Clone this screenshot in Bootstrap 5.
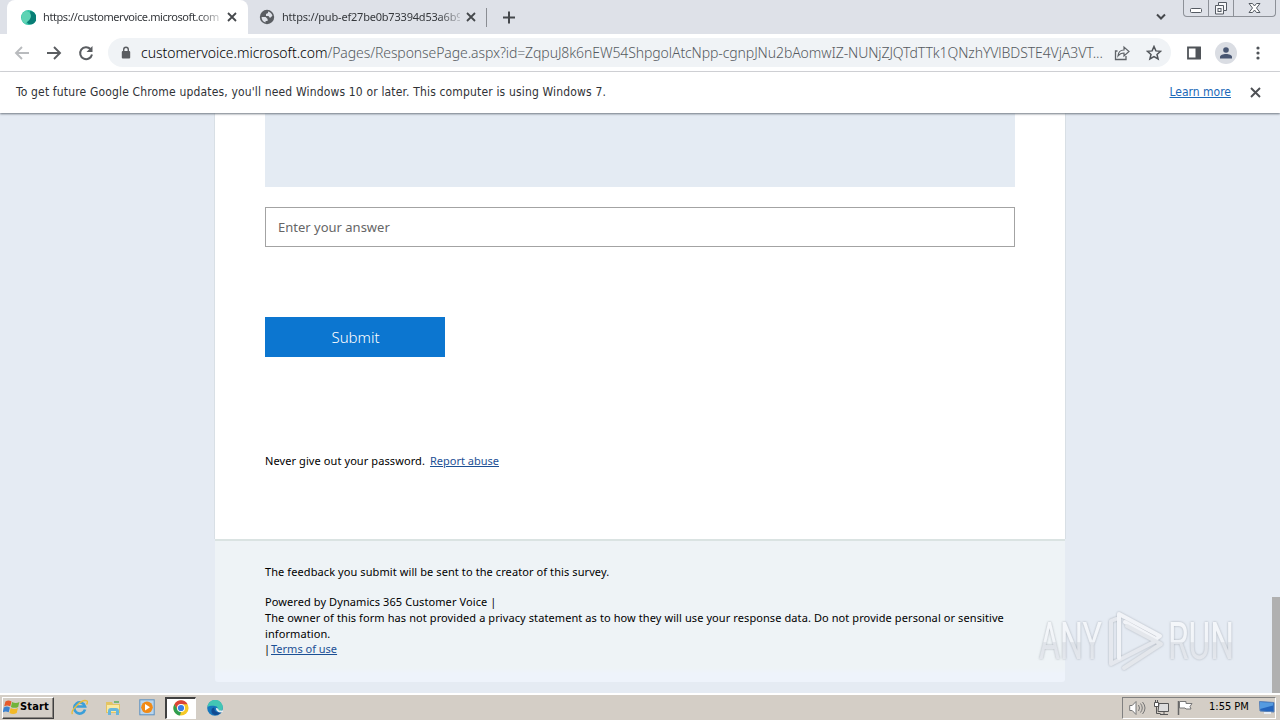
<!DOCTYPE html>
<html lang="en">
<head>
    <meta charset="UTF-8">
    <title>Customer Voice</title>
    <link href="https://cdn.jsdelivr.net/npm/bootstrap@5.3.0/dist/css/bootstrap.min.css" rel="stylesheet">
    <style>
        body { width: 1280px; height: 720px; overflow: hidden; background: #e5ebf3; color: #202124; font-family: "DejaVu Sans Condensed", "DejaVu Sans", sans-serif; font-size: 12px; }
        svg { display: block; flex: none; }
        .txt { white-space: nowrap; flex: none; }

        /* browser chrome */
        .tabstrip { height: 34px; background: #dee1e8; }
        .tab-active { width: 241px; margin-left: 7px; background: #fff; border-radius: 8px 8px 0 0; padding-left: 14px; }
        .tab-idle { width: 238px; padding-left: 11px; }
        .tab-title { font-family: "Noto Sans", sans-serif; font-size: 11px; line-height: 16px; letter-spacing: -.42px; color: #35383c; -webkit-mask-image: linear-gradient(90deg, #000 88%, transparent 104%); mask-image: linear-gradient(90deg, #000 88%, transparent 104%); }
        .tab-sep { width: 1px; height: 19px; background: #8a8d93; }
        .win-buttons { width: 93px; height: 17px; border: 1px solid #8d9198; border-top: 0; border-radius: 0 0 4px 4px; }
        .win-buttons > div { border-right: 1px solid #8d9198; height: 16px; }
        .win-buttons > div:last-child { border-right: 0; }
        .toolbar { height: 38px; border-bottom: 1px solid #d5d7da; }
        .omnibox { width: 1063px; height: 29px; margin-left: 14px; border-radius: 15px; background: #f0f3f6; padding-left: 13px; }
        .url { font-family: "Noto Sans", sans-serif; font-size: 14px; line-height: 20px; font-weight: 300; width: 962px; color: #555a60; letter-spacing: -.09px; }
        .url b { font-weight: 300; color: #000; letter-spacing: -.02px; }
        .avatar { width: 22px; height: 22px; background: #dadde3; }
        .infobar { height: 41px; padding-bottom: 2px; box-shadow: 0 1px 2px #6f7781; z-index: 2; color: #303236; }
        .info-text { letter-spacing: .16px; }
        .info-link { color: #1a68b8; }

        /* survey page */
        .viewport { height: 580px; font-family: "Noto Sans", "Open Sans", sans-serif; }
        .survey { width: 852px; margin-left: 214px; height: 569px; }
        .survey-body { height: 426px; border: 1px solid #d8dfe5; border-top: 0; border-bottom: 0; padding: 0 50px; }
        .question-box { height: 74px; background: #e4ebf3; }
        .answer { height: 40px; margin-top: 20px; border: 1px solid #a3a3a3; border-radius: 0; padding: 0 12px; font-size: 13px; letter-spacing: 0; }
        .answer::placeholder { color: #666; }
        .submit-btn { width: 180px; height: 40px; margin-top: 70px; background: #0c76d0; border: 0; border-radius: 0; color: #fff; font-size: 15px; font-weight: 300; padding: 0 0 0 1px; }
        .fine { font-size: 11px; line-height: 16px; color: #000; letter-spacing: .09px; }
        .fine a { color: #1c5095; letter-spacing: 0; }
        .survey-foot { width: 850px; margin-left: 1px; height: 143px; background: linear-gradient(#eef3f6 0 90%, #eef3fb 94%); border-top: 2px solid #dae3e2; border-radius: 0 0 3px 3px; padding: 23px 50px 0; }
        .terms-row { line-height: 14px; }
        .scroll-thumb { right: 0; bottom: 0; width: 8px; height: 96px; background: #b0b0b0; }
        .watermark { left: 1032px; top: 490px; }

        /* windows taskbar */
        .taskbar { height: 27px; background: #d4cec6; border-top: 2px solid #fff; padding-left: 2px; font-family: "DejaVu Sans Condensed", sans-serif; }
        .start-btn { width: 52px; height: 22px; border: 1px solid #fff; border-right-color: #404040; border-bottom-color: #404040; box-shadow: inset -1px -1px #8a8580; font-weight: bold; font-size: 11px; color: #000; }
        .task-active { width: 31px; height: 22px; background: #fff; border: 1px solid #fff; border-top: 2px solid #404040; border-left: 2px solid #404040; }
        .tray { width: 154px; height: 22px; border: 1px solid #fff; border-top-color: #808080; border-left-color: #808080; font-size: 11px; color: #000; }
    </style>
</head>
<body class="d-flex flex-column">

<div class="tabstrip d-flex flex-shrink-0">
    <div class="tab-active d-flex align-items-center">
        <svg width="15" height="15" viewBox="0 0 15 15">
            <circle cx="7.5" cy="7.5" r="7.500" fill="#35c3a6"/>
            <path d="M9 1a7 7 0 0 1 3 13c-4 1-7-1-6-4 1-2 4-4 3-9z" fill="#087e76"/>
            <path d="M5 1c5 1 6 5 4 8s-4 3-4 5A7 7 0 0 1 5 1z" fill="#5fd3b4"/>
        </svg>
        <div class="tab-title txt" style="width: 176px; margin-left: 7px">https://customervoice.microsoft.com</div>
        <svg style="margin-left: 6px" width="14" height="14" viewBox="0 0 14 14"><path d="M3 3l8 8M11 3l-8 8" stroke="#45484c" stroke-width="1.800"/></svg>
    </div>
    <div class="tab-idle d-flex align-items-center">
        <svg width="16" height="16" viewBox="0 0 16 16">
            <circle cx="8" cy="8" r="7.200" fill="#5a5d62"/>
            <path d="M2.600 8h4l2 2v2H6.600v1.500C4 13 2.400 10.500 2.600 8zM9 2.500c2 .3 4 2 4.400 4.300L11 9 9.500 7H7V5l2-1z" fill="#dee1e8"/>
        </svg>
        <div class="tab-title txt" style="width: 178px; margin-left: 7px; letter-spacing: -.2px">https://pub-ef27be0b73394d53a6b9</div>
        <svg class="ms-1" width="14" height="14" viewBox="0 0 14 14"><path d="M3 3l8 8M11 3l-8 8" stroke="#45484c" stroke-width="1.800"/></svg>
    </div>
    <div class="tab-sep align-self-center"></div>
    <svg class="align-self-center ms-3" width="13" height="13" viewBox="0 0 13 13"><path d="M6 .5v12M0 6.500h12" stroke="#45484c" stroke-width="2"/></svg>
    <div class="ms-auto d-flex align-items-start">
        <svg style="margin: 13px 17px 0 0" width="10" height="8" viewBox="0 0 10 8"><path d="M1 1.500l4 4 4-4" fill="none" stroke="#45484c" stroke-width="2"/></svg>
        <div class="win-buttons d-flex me-1">
            <div class="d-flex justify-content-center" style="width: 25px">
                <svg width="13" height="15" viewBox="0 0 13 15"><rect x=".5" y="8.500" width="11" height="4" rx="1" fill="#fff" stroke="#555b63"/></svg>
            </div>
            <div class="d-flex justify-content-center" style="width: 25px">
                <svg width="14" height="16" viewBox="0 0 14 16"><path d="M4.500 2.500h8v8h-3v3.500h-8V5.500h3z" fill="#f7f8fa" stroke="#555b63"/><path d="M4.500 5.500h5v5" fill="none" stroke="#555b63"/><rect x="4" y="8.500" width="3" height="3" fill="none" stroke="#555b63"/></svg>
            </div>
            <div class="d-flex justify-content-center flex-grow-1">
                <svg width="13" height="15" viewBox="0 0 13 15"><path d="M1 3.500h3.500l2 2.500 2-2.500H12L8.500 8l3.500 4.500H8.500l-2-2.500-2 2.500H1L4.500 8z" fill="#fff" stroke="#555b63"/></svg>
            </div>
        </div>
    </div>
</div>

<div class="toolbar d-flex flex-shrink-0 align-items-center bg-white">
    <svg style="margin-left: 14px" width="16" height="16" viewBox="0 0 16 16"><path d="M15 8H2M8 2L2 8l6 6" fill="none" stroke="#b9bbbe" stroke-width="1.900"/></svg>
    <svg style="margin-left: 16px" width="16" height="16" viewBox="0 0 16 16"><path d="M1 8h13M8 2l6 6-6 6" fill="none" stroke="#5a5d61" stroke-width="1.900"/></svg>
    <svg style="margin-left: 16px" width="16" height="16" viewBox="0 0 16 16"><path d="M12.500 4A6 6 0 1 0 14 9.500" fill="none" stroke="#5a5d61" stroke-width="2"/><path d="M14.500 1v6H8.500z" fill="#5a5d61"/></svg>
    <div class="omnibox d-flex align-items-center">
        <svg width="10" height="13" viewBox="0 0 10 13"><rect x=".8" y="5" width="8.400" height="7.500" rx="1" fill="#5a5d61"/><path d="M2.700 5.500V3.500a2.300 2.300 0 0 1 4.600 0v2" fill="none" stroke="#5a5d61" stroke-width="1.400"/></svg>
        <div class="url txt" style="margin-left: 10px"><b>customervoice.microsoft.com</b>/Pages/ResponsePage.aspx?id=ZqpuJ8k6nEW54ShpgolAtcNpp-cgnpJNu2bAomwIZ-NUNjZJQTdTTk1QNzhYVlBDSTE4VjA3VT...</div>
        <svg style="margin-left: 11px" width="17" height="16" viewBox="0 0 17 16"><path d="M3.500 6H1.500v8.500H12V11" fill="none" stroke="#5f6368" stroke-width="1.300"/><path d="M4 11c.3-4 2.500-6 6-6V2l5 4.500L10 11V8C7.500 8 5.500 9 4 11z" fill="none" stroke="#5f6368" stroke-width="1.200"/></svg>
        <svg style="margin-left: 15px" width="16" height="16" viewBox="0 0 16 16"><path d="M8 1.500l1.900 4.400 4.700.4-3.600 3.100 1.100 4.600L8 11.600 3.900 14 5 9.400 1.400 6.300l4.700-.4z" fill="none" stroke="#505459" stroke-width="1.500"/></svg>
    </div>
    <svg style="margin-left: 16px" width="14" height="14" viewBox="0 0 14 14"><path d="M1 1.500h12v11H1z" fill="none" stroke="#505459" stroke-width="1.800"/><path d="M8.500 1H14v12H8.500z" fill="#505459"/></svg>
    <div class="avatar rounded-circle d-flex align-items-center justify-content-center" style="margin-left: 14px">
        <svg width="12" height="12" viewBox="0 0 12 12"><circle cx="6" cy="3" r="2.800" fill="#485672"/><path d="M0 11.500V10c0-4 12-4 12 0v1.500z" fill="#485672"/></svg>
    </div>
    <svg style="margin-left: 19px" width="4" height="14" viewBox="0 0 4 14" fill="#505459"><circle cx="2" cy="2" r="1.600"/><circle cx="2" cy="7" r="1.600"/><circle cx="2" cy="12" r="1.600"/></svg>
</div>

<div class="infobar d-flex flex-shrink-0 align-items-center bg-white position-relative px-3">
    <span class="info-text txt">To get future Google Chrome updates, you'll need Windows 10 or later. This computer is using Windows 7.</span>
    <a href="#" class="info-link txt ms-auto">Learn more</a>
    <svg style="margin: 2px 3px 0 19px" width="11" height="11" viewBox="0 0 11 11"><path d="M1 1l9 9M10 1l-9 9" stroke="#4d5054" stroke-width="1.900"/></svg>
</div>

<div class="viewport flex-shrink-0 position-relative">
    <div class="survey">
        <div class="survey-body bg-white">
            <div class="question-box"></div>
            <input type="text" class="form-control answer" placeholder="Enter your answer">
            <button type="button" class="btn submit-btn">Submit</button>
            <div class="fine txt d-flex" style="margin-top: 96px">Never give out your password.<a href="#" style="margin-left: 5px">Report abuse</a></div>
        </div>
        <div class="survey-foot fine">
            <div class="txt">The feedback you submit will be sent to the creator of this survey.</div>
            <div class="txt" style="margin-top: 14px">Powered by Dynamics 365 Customer Voice |</div>
            <div class="txt">The owner of this form has not provided a privacy statement as to how they will use your response data. Do not provide personal or sensitive<br>information.</div>
            <div class="terms-row txt d-flex"><span style="width: 6px; margin-left: -1px">|</span><a href="#" class="ms-0" style="padding-left: 1px">Terms of use</a></div>
        </div>
    </div>
    <div class="scroll-thumb position-absolute"></div>
    <svg class="watermark position-absolute" width="236" height="76" viewBox="0 0 236 76">
        <defs>
            <linearGradient id="glass" x1="0" y1="0" x2="0" y2="1">
                <stop offset="0" stop-color="#f6f8fb"/><stop offset=".5" stop-color="#f1f4f8"/><stop offset=".52" stop-color="#dfe3e9"/><stop offset="1" stop-color="#e7eaf0"/>
            </linearGradient>
            <filter id="glow" x="-10%" y="-10%" width="120%" height="120%"><feDropShadow dx="0" dy="0" stdDeviation="1.300" flood-color="#8d949e" flood-opacity=".7"/></filter>
        </defs>
        <g filter="url(#glow)" fill="url(#glass)" font-family="Roboto, sans-serif" font-size="51">
            <text x="7" y="56" textLength="63" lengthAdjust="spacingAndGlyphs">ANY</text>
            <text x="136" y="56" textLength="66" lengthAdjust="spacingAndGlyphs">RUN</text>
            <g fill="none" stroke-width="4" stroke-linecap="round" stroke-linejoin="round">
                <path d="M84 16l-5 2v43l43-22" stroke="#e5e8ee"/>
                <path d="M87 55V11l41 22-4 3-31-17" stroke="#f2f4f8"/>
                <path d="M95 23l34 18-37 24" stroke="#e4e7ec"/>
            </g>
        </g>
    </svg>
</div>

<div class="taskbar d-flex flex-shrink-0 align-items-center">
    <div class="start-btn d-flex align-items-center">
        <svg width="17" height="17" viewBox="1 1 14 14">
            <path d="M3 3c2-1 3-1 5 0L7 7C5 6 4 6 2 7z" fill="#e65a2b"/><path d="M8.500 3.500c2 1 4 1 6 0l-1 4c-2 1-4 1-6 0z" fill="#71b43c"/>
            <path d="M1.700 8c2-1 3-1 5 0l-1 4c-2-1-3-1-5 0z" fill="#3c82cf"/><path d="M7.300 8.500c2 1 4 1 6 0l-1 4c-2 1-4 1-6 0z" fill="#f2b927"/>
        </svg>
        <span class="txt" style="letter-spacing: .15px">Start</span>
    </div>
    <svg style="margin-left: 17px" width="17" height="17" viewBox="0 0 17 17"><path d="M14 10.500A5.500 5.500 0 1 1 14 7.500H5" fill="none" stroke="#3b9fd9" stroke-width="2.700"/><path d="M1.500 15C-1 12 11-1 16 2c.8.500.5 2-.5 3.500" fill="none" stroke="#e9bd3b" stroke-width="1.400"/></svg>
    <svg style="margin-left: 17px" width="17" height="17" viewBox="0 0 17 17"><path d="M1 3h6l1 2h7v9H1z" fill="#e3c463"/><path d="M2 6h12v7H2z" fill="#f9e9a2"/><path d="M3 16v-4q0-3 3-3h5q3 0 3 3v4h-3v-4H6v4z" fill="#67b6dc"/><path d="M9 2h5v2H9z" fill="#79b776"/></svg>
    <svg style="margin-left: 17px" width="17" height="17" viewBox="0 0 17 17"><rect x=".8" y=".8" width="14.400" height="15" fill="#b9d5ed" stroke="#5c91c0"/><circle cx="8" cy="8.300" r="5.800" fill="#f18a16"/><path d="M6 5l5 3.300L6 11.600z" fill="#fff"/></svg>
    <div class="task-active d-flex align-items-center justify-content-center" style="margin-left: 9px">
        <svg width="16" height="16" viewBox="0 0 16 16"><circle cx="8" cy="8" r="7.600" fill="#f6c927"/><path d="M1.400 4.200A7.600 7.600 0 0 1 14.600 4.200H8L4.700 10z" fill="#db4437"/><path d="M1.400 4.200L4.700 9.900 8 11.800 7 15.600A7.600 7.600 0 0 1 1.400 4.200z" fill="#2f9e50"/><circle cx="8" cy="8" r="4" fill="#fff"/><circle cx="8" cy="8" r="3.100" fill="#397de6"/></svg>
    </div>
    <svg style="margin-left: 11px" width="16" height="16" viewBox="0 0 16 16"><circle cx="8" cy="8" r="7.800" fill="#1677bd"/><path d="M.4 7A7.700 7.700 0 0 1 15.800 8c0 3-4 4-6 2.500 2-2 .5-4.500-2-4.500C5 5.500 2 6 .4 7z" fill="#42c6b4"/><path d="M7.500 7.500c-1 4 3 6 7 4.500-4 5-11 3-10-2 .3-1.500 1.500-2.500 3-2.500z" fill="#114a91"/><path d="M9 8.500c0-1 2-.5 3 2h4V12l-3 .5C10.500 12 9 10.500 9 8.500z" fill="#e5edf2"/></svg>

    <div class="tray d-flex align-items-center ms-auto me-1">
        <svg style="margin-left: 6px" width="17" height="16" viewBox="0 0 17 16"><path d="M.7 5.500h2.500L7 1.500v13L3.200 10.500H.7z" fill="#fff" stroke="#777"/><path d="M9.500 5q2 3 0 6M11.500 3.500q3.500 4.500 0 9M13.500 2q5 6 0 12" fill="none" stroke="#777"/></svg>
        <svg style="margin-left: 7px" width="17" height="16" viewBox="0 0 17 16"><path d="M6 3.500h9.500v8H5z" fill="#ddd" stroke="#555"/><path d="M1.500 2.500h4v4h-4zM2.500 0v2M4.500 0v2M3.500 6.500v7h4M11 12v2M7 14.500h8" fill="none" stroke="#555"/><path d="M2 3h3v3H2z" fill="#fff"/></svg>
        <svg style="margin-left: 7px" width="17" height="16" viewBox="0 0 17 16"><path d="M1.500 1v14" stroke="#666" stroke-width="1.500"/><path d="M2.500 1.500H9v2h6l-2 3 1 2.500H9l-1-1H2.500z" fill="#fff" stroke="#777"/></svg>
        <span class="txt" style="margin-left: 15px">1:55 PM</span>
        <svg class="ms-auto" width="16" height="15" viewBox="0 0 16 15"><path d="M.5 1.500L15 2.500V12L1 11z" fill="#2465bd" stroke="#5b83b8"/><path d="M1 2l13 1v2.500L1 9z" fill="#559be0"/><path d="M5 12h7v2H5z" fill="#e7edf5"/></svg>
    </div>
</div>

<script src="https://cdn.jsdelivr.net/npm/bootstrap@5.3.0/dist/js/bootstrap.bundle.min.js"></script>
</body>
</html>
